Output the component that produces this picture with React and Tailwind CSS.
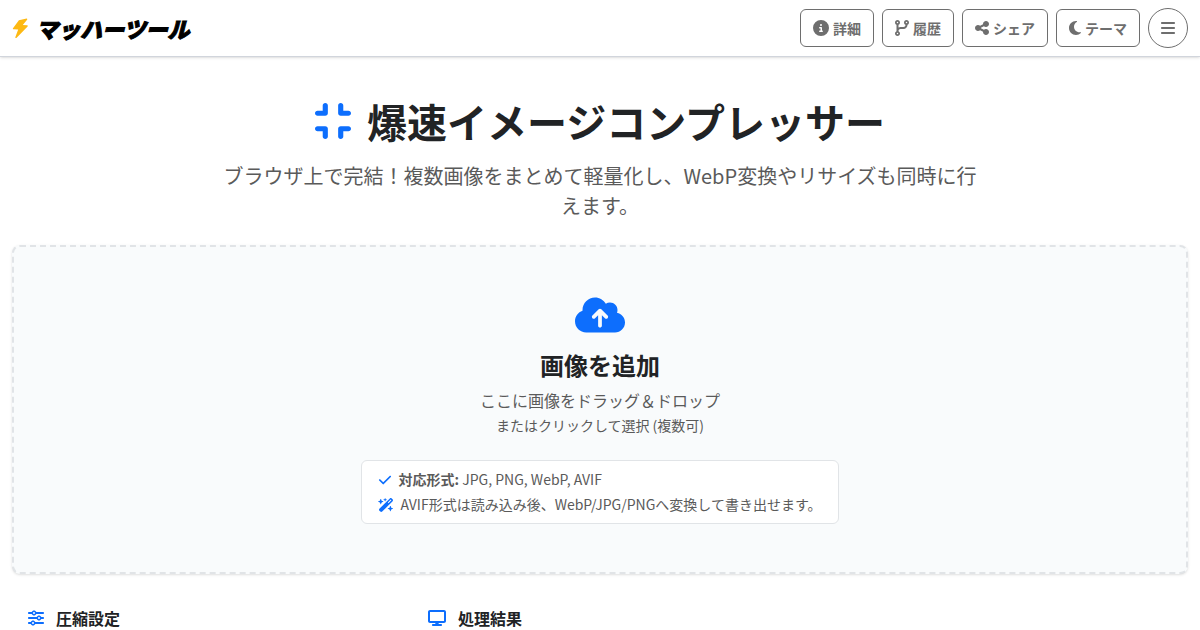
import React from "react";
import {
  FaBars,
  FaCheck,
  FaCircleInfo,
  FaCloudArrowUp,
  FaCodeBranch,
  FaCompress,
  FaDisplay,
  FaMoon,
  FaShareNodes,
  FaSliders,
  FaWandMagicSparkles,
} from "react-icons/fa6";

const navItems = [
  { label: "詳細", icon: FaCircleInfo, size: "w-4 h-4" },
  { label: "履歴", icon: FaCodeBranch, size: "w-3.5 h-4" },
  { label: "シェア", icon: FaShareNodes, size: "w-3.5 h-4" },
  { label: "テーマ", icon: FaMoon, size: "w-3 h-4" },
];

const BoltLogo = () => (
  <svg viewBox="0 0 16 22" className="w-4 h-[22px]" aria-hidden="true">
    <path
      d="M14.6 1.6 6.9 3.2 1 11.2q-.5.9.6 1.1l4.6.2-2.8 7.6q-.3 1.4 1 .8L15.6 9.4q.6-.9-.5-1.1l-4.3-.2 4.3-5.4q.5-1-.5-1.1Z"
      fill="#fdb913"
    />
  </svg>
);

const Header = () => (
  <header className="flex items-center justify-between px-3 py-2 bg-white border-b border-gray-300 shadow-sm">
    <a href="#" className="flex items-center gap-2 text-black">
      <BoltLogo />
      <span className="text-[22px] leading-8 font-black italic [-webkit-text-stroke:1px_black]">
        マッハーツール
      </span>
    </a>
    <nav className="flex items-center gap-2">
      {navItems.map(({ label, icon: Icon, size }) => (
        <button
          key={label}
          type="button"
          className="flex items-center gap-1 h-[38px] px-3 rounded-md border border-[#6e6e6e] text-[#6e6e6e] text-sm font-bold"
        >
          <Icon className={size} />
          {label}
        </button>
      ))}
      <button
        type="button"
        aria-label="メニュー"
        className="flex items-center justify-center size-10 rounded-full border border-[#6e6e6e] text-[#6e6e6e]"
      >
        <FaBars className="text-base" />
      </button>
    </nav>
  </header>
);

const DropZone = () => (
  <button
    type="button"
    className="w-full flex flex-col items-center px-4 py-12 rounded-lg border-2 border-dashed border-[#e1e4e7] bg-[#f9fbfc] shadow-sm"
  >
    <FaCloudArrowUp className="w-[50px] h-10 text-[#0d6efd]" />
    <span className="mt-3.5 text-2xl leading-8 font-bold text-[#212325]">画像を追加</span>
    <span className="mt-1 text-base leading-[30px] text-[#5a5a5a]">ここに画像をドラッグ＆ドロップ</span>
    <span className="text-sm leading-5 text-[#5a5a5a]">またはクリックして選択 (複数可)</span>
    <span className="mt-[25px] flex flex-col px-4 py-1.5 rounded-md border border-[#e1e4e7] bg-white text-left text-sm leading-[25px] text-[#5a5a5a]">
      <span className="flex items-center gap-1.5">
        <FaCheck className="text-[#0d6efd]" />
        <span>
          <strong>対応形式:</strong> JPG, PNG, WebP, AVIF
        </span>
      </span>
      <span className="flex items-center gap-1.5">
        <FaWandMagicSparkles className="w-4 text-[#0d6efd]" />
        AVIF形式は読み込み後、WebP/JPG/PNGへ変換して書き出せます。
      </span>
    </span>
  </button>
);

const PanelTitle = ({ icon: Icon, size, children }) => (
  <h2 className="flex items-center gap-3 text-base leading-6 font-bold text-[#212325]">
    <Icon className={`${size} text-[#0d6efd]`} />
    {children}
  </h2>
);

const App = () => (
  <div className="min-h-screen bg-white font-['Noto_Sans_CJK_JP','Noto_Sans',sans-serif]">
    <Header />
    <main className="pt-8">
      <section className="max-w-3xl mx-auto text-center">
        <h1 className="flex items-center justify-center gap-4 text-[40px] leading-[64px] font-bold text-[#212325]">
          <FaCompress className="w-9 h-[42px] text-[#0d6efd]" />
          爆速イメージコンプレッサー
        </h1>
        <p className="mt-2 text-xl leading-[30px] text-[#5a5a5a]">
          ブラウザ上で完結！複数画像をまとめて軽量化し、WebP変換やリサイズも同時に行えます。
        </p>
      </section>
      <section className="mt-6 px-3">
        <DropZone />
      </section>
      <div className="mt-8 grid grid-cols-3">
        <div className="px-7">
          <PanelTitle icon={FaSliders} size="w-4 h-4">
            圧縮設定
          </PanelTitle>
        </div>
        <div className="col-span-2 px-7">
          <PanelTitle icon={FaDisplay} size="w-[18px] h-4">
            処理結果
          </PanelTitle>
        </div>
      </div>
    </main>
  </div>
);

export default App;
